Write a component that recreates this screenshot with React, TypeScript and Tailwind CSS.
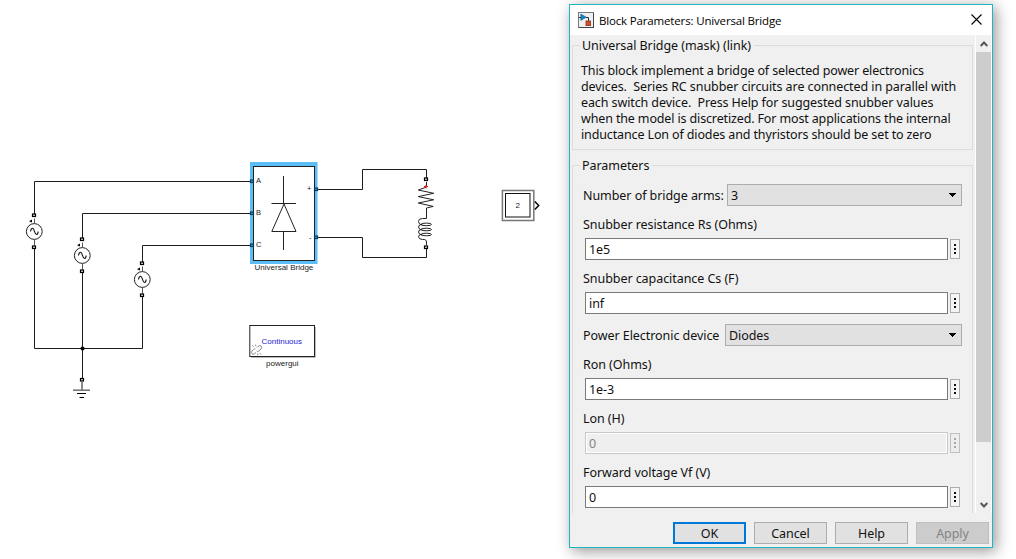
import type { ReactNode } from "react";

function Port({ x, y, blue = false }: { x: number; y: number; blue?: boolean }) {
  return (
    <rect
      x={x - 1.5}
      y={y - 1}
      width={3}
      height={2.5}
      fill={blue ? "#3d93cf" : "#ddd"}
      stroke={blue ? "#0b3c5e" : "#000"}
      strokeWidth={1.2}
    />
  );
}

function AcSource({ x, y }: { x: number; y: number }) {
  return (
    <g>
      <path d={`M${x} ${y - 13}v5M${x} ${y + 8}v6`} stroke="#555" strokeWidth={1} />
      <circle cx={x - 0.2} cy={y} r={7.9} fill="#fff" stroke="#222" strokeWidth={1} />
      <path
        d={`M${x - 4} ${y}c0.4-2.6 1-3.2 2-3.2c2.2 0 1.8 6.2 4 6.2c1 0 1.6-1 1.6-3`}
        fill="none"
        stroke="#111"
        strokeWidth={1.1}
      />
      <path d={`M${x - 5.5} ${y - 10.3}l3-1.6v3z`} fill="#000" />
      <Port x={x - 0.5} y={y - 16.5} />
      <Port x={x - 0.5} y={y + 15.5} />
    </g>
  );
}

function Diagram() {
  return (
    <svg width="569" height="559" viewBox="0 0 569 559" className="shrink-0" fontFamily="'Liberation Sans', Arial, sans-serif" fontSize={8}>
      <g fill="none" stroke="#1c1c1c" strokeWidth={1}>
        <path d="M251 181.5H34.5V214M34.5 248V348.5H142.5V296" />
        <path d="M251 213.5H82.5V238M82.5 272V378" />
        <path d="M251 245.5H142.5V262" />
        <path d="M317 189.5H362.5V169.5H426.5V178M317 237.5H362.5V257.5H426.5V248" />
      </g>
      <rect x={80.8} y={346.8} width={3.5} height={3.5} rx={0.7} />
      <AcSource x={34.5} y={231.5} />
      <AcSource x={82.5} y={255.5} />
      <AcSource x={142.5} y={279.5} />

      <Port x={82} y={379.5} />
      <path d="M82 382v8" stroke="#888" strokeWidth={2} />
      <path d="M73 390.2h17" stroke="#777" strokeWidth={1.6} />
      <path d="M77 393.5h9M79.5 397.5h4.5" stroke="#000" strokeWidth={1} />

      <rect x={250} y={162} width={67.5} height={102} fill="#5cbcf6" />
      <rect x={253.5} y={166.5} width={61} height={94} fill="#fff" stroke="#222" />
      <path
        d="M283.5 176V203.5M271.5 203.5H296M284 204L271.8 231.5H296ZM283.5 231.5V250"
        fill="none"
        stroke="#222"
        strokeWidth={1}
      />
      <Port x={252} y={181} blue />
      <Port x={252} y={213} blue />
      <Port x={252} y={245} blue />
      <Port x={316} y={189} blue />
      <Port x={316} y={237} blue />
      <g fill="#222" fontSize={7.5}>
        <text x={256} y={183.3}>A</text>
        <text x={256} y={215.3}>B</text>
        <text x={256} y={247.3}>C</text>
        <text x={307} y={191}>+</text>
        <text x={309} y={239.5}>-</text>
      </g>
      <text x={254.5} y={270} textLength={58.8} fill="#222">Universal Bridge</text>

      <Port x={426} y={179} />
      <g fill="none" stroke="#222" strokeWidth={1}>
        <path d="M426.5 182V187L418.3 190L433.7 193.3L418.3 196.6L433.7 199.8L418.3 203L433.2 206.4L426.5 208V218.5" />
        <path d="M426.5 218.5H422.5Q418.5 218.5 418.5 221.5T422.5 225.2" />
        <ellipse cx={426.3} cy={224.4} rx={5.2} ry={1.3} />
        <path d="M422.5 224Q418.5 224.5 418.5 227T422.5 230.2" />
        <ellipse cx={426.3} cy={229.5} rx={5.2} ry={1.3} />
        <path d="M422.5 229Q418.5 229.5 418.5 232T422.5 235.2" />
        <ellipse cx={426.3} cy={234.5} rx={5.2} ry={1.3} />
        <path d="M422.5 234Q418.5 234.5 418.5 236.8T422.5 239.5H424.5Q426.5 239.8 426.5 242V245" />
      </g>
      <path d="M424 186.5h4M426 184.8v3.6" stroke="#f01818" strokeWidth={1} />
      <Port x={426} y={247} />

      <rect x={502.4} y={190.5} width={31.4} height={30} fill="#fff" stroke="#777" strokeWidth={1.5} />
      <rect x={505.5} y={193.5} width={24.5} height={23.5} fill="#fff" stroke="#111" />
      <text x={517.7} y={208.2} textAnchor="middle" fill="#222">2</text>
      <path d="M534.8 201.5l3.9 4-3.9 4" fill="none" stroke="#000" strokeWidth={1.5} />

      <path d="M251 357.5H315.5V327" fill="none" stroke="#bbb" />
      <rect x={249.8} y={325.5} width={64.7} height={31} fill="#fff" stroke="#222" />
      <g fill="none" stroke="#888" strokeWidth={1}>
        <path d="M257 347.5l1.4-1.4q1.6-1.2 2.7 0t0 2.7l-2.2 2.2q-1 .8-2 .2" />
        <path d="M255.3 349.2q-1-.6-1.7.1l-1.6 1.7q-1.2 1.6 0 2.7t2.7 0l1.4-1.4" />
        <path d="M252.3 345.3l1.3 1.5M255.6 344.6l.2 1.6M259.6 353l1.5 1.5M257.6 353.6l.2 1.7" />
      </g>
      <text x={261.5} y={344} textLength={40.5} fill="#1b1bd8">Continuous</text>
      <text x={266} y={366} textLength={32.6} fill="#222">powergui</text>
    </svg>
  );
}

function Legend({ children }: { children: ReactNode }) {
  return (
    <div className="flex h-[18px] items-center">
      <div className="h-px w-2 bg-[#dcdcdc]" />
      <span className="pt-[2px] pr-[3px] pl-[2px]">{children}</span>
      <div className="h-px flex-1 bg-[#dcdcdc]" />
    </div>
  );
}

function Select({ label, value, labelWidth }: { label: string; value: string; labelWidth: string }) {
  return (
    <div className="flex h-[22px] items-center pr-[10px] pl-[10px]">
      <span className={`${labelWidth} shrink-0 pt-[2px] whitespace-nowrap`}>{label}</span>
      <div className="flex h-full flex-1 items-center justify-between border border-[#adadad] bg-[#e1e1e1] pr-[5px] pl-[3px]">
        <span className="pt-[2px]">{value}</span>
        <svg width="7" height="4" viewBox="0 0 7 4" shapeRendering="crispEdges">
          <path d="M0 0h7v1H6v1H5v1H4v1H3V3H2V2H1V1H0z" />
        </svg>
      </div>
    </div>
  );
}

function Field({ label, value, disabled = false }: { label: string; value: string; disabled?: boolean }) {
  return (
    <div>
      <div className="h-8 pt-[10px] pl-[10px]">{label}</div>
      <div className="flex h-[22px] items-center gap-[2px] pl-3">
        <div
          className={`flex h-full w-[363px] items-center border pt-[2px] pl-[3px] ${
            disabled ? "border-[#c8c8c8] bg-[#efefef] text-[#838383] shadow-[inset_0_0_0_1px_white]" : "border-[#7a7a7a] bg-white"
          }`}
        >
          {value}
        </div>
        <div
          className={`flex h-5 w-[10px] flex-col items-center justify-center gap-[2px] border ${
            disabled ? "border-[#c0c0c0] bg-[#ededed] text-[#a8a8a8]" : "border-[#adadad] bg-[#f5f5f5] text-[#111]"
          }`}
        >
          <div className="size-[2px] bg-current" />
          <div className="size-[2px] bg-current" />
          <div className="size-[2px] bg-current" />
        </div>
      </div>
    </div>
  );
}

function Button({ children, variant }: { children: ReactNode; variant?: "default" | "disabled" }) {
  const look =
    variant === "default"
      ? "border-2 border-[#0078d7] bg-[#e1e1e1]"
      : variant === "disabled"
        ? "border border-[#bfbfbf] bg-[#cccccc] text-[#838383]"
        : "border border-[#adadad] bg-[#e1e1e1]";
  return <div className={`flex h-[22px] w-[73px] items-center justify-center pt-[2px] ${look}`}>{children}</div>;
}

function ModelIcon() {
  return (
    <svg width="16" height="16" viewBox="0 0 16 16">
      <rect x={0.5} y={0.5} width={15} height={15} fill="#eef0f2" stroke="#777" />
      <path d="M15.5 1v14.5H1" fill="none" stroke="#444" />
      <path d="M2.8 2l5.4 3.2-5.4 3.2z" fill="#1784bd" stroke="#0e5a86" strokeWidth={0.6} />
      <path d="M1 5.5h2M8 5.5h2.5V9" fill="none" stroke="#234" />
      <rect x={8} y={9} width={4.6} height={4.6} fill="#d0512a" stroke="#8c2f14" strokeWidth={0.8} />
    </svg>
  );
}

function Dialog() {
  return (
    <div className="absolute top-1 left-[569px] flex h-[544px] w-[424px] flex-col border border-[#1fb6c1] bg-[#f0f0f0] font-['Noto_Sans',sans-serif] text-[12.5px] leading-[18px] tracking-[-0.06px] text-[#111] shadow-[3px_3px_14px_rgba(0,0,0,0.42)]">
      <div className="flex h-[30px] shrink-0 items-center bg-white pr-[10px] pl-2">
        <ModelIcon />
        <span className="ml-[5px] flex-1 pt-px font-['Open_Sans',sans-serif] text-[11.5px] tracking-[-0.16px] text-black">
          Block Parameters: Universal Bridge
        </span>
        <svg width="11" height="11" viewBox="0 0 11 11" className="mb-[2px]">
          <path d="M.5.5l10 10M10.5.5l-10 10" stroke="#000" strokeWidth={1.1} />
        </svg>
      </div>

      <div className="flex h-[478px] shrink-0 overflow-hidden">
        <div className="w-[405px] shrink-0 pt-[1px] pl-[2px]">
          <div className="w-[401px]">
            <Legend>Universal Bridge (mask) (link)</Legend>
            <div className="-mt-[9px] h-[105px] border border-t-0 border-[#dcdcdc] pt-[18px] pl-2 leading-4 whitespace-pre">
              <div className="tracking-[-0.14px]">This block implement a bridge of selected power electronics</div>
              <div className="tracking-[-0.08px]">devices.  Series RC snubber circuits are connected in parallel with</div>
              <div className="tracking-[-0.1px]">each switch device.  Press Help for suggested snubber values</div>
              <div className="tracking-[-0.14px]">when the model is discretized. For most applications the internal</div>
              <div className="tracking-[-0.13px]">inductance Lon of diodes and thyristors should be set to zero</div>
            </div>
          </div>
          <div className="mt-[6px] w-[401px]">
            <Legend>Parameters</Legend>
            <div className="-mt-[9px] h-[380px] border border-t-0 border-[#dcdcdc] pt-[19px]">
              <Select label="Number of bridge arms:" value="3" labelWidth="w-[144px]" />
              <Field label="Snubber resistance Rs (Ohms)" value="1e5" />
              <Field label="Snubber capacitance Cs (F)" value="inf" />
              <div className="h-[10px]" />
              <Select label="Power Electronic device" value="Diodes" labelWidth="w-[142px]" />
              <Field label="Ron (Ohms)" value="1e-3" />
              <Field label="Lon (H)" value="0" disabled />
              <Field label="Forward voltage Vf (V)" value="0" />
            </div>
          </div>
        </div>
        <div className="flex w-[17px] flex-col items-center border-x border-white bg-[#f0f0f0]">
          <div className="flex h-[17px] w-full shrink-0 items-center justify-center">
            <svg width="8" height="6" viewBox="0 0 8 6">
              <path d="M.7 5L4 1.5 7.3 5" fill="none" stroke="#555" strokeWidth={1.9} />
            </svg>
          </div>
          <div className="h-[390px] w-full bg-[#cdcdcd]" />
          <div className="mt-auto flex h-[17px] w-full items-center justify-center">
            <svg width="8" height="6" viewBox="0 0 8 6">
              <path d="M.7 1L4 4.5 7.3 1" fill="none" stroke="#555" strokeWidth={1.9} />
            </svg>
          </div>
        </div>
      </div>

      <div className="flex justify-end gap-2 pt-[9px] pr-[3px]">
        <Button variant="default">OK</Button>
        <Button>Cancel</Button>
        <Button>Help</Button>
        <Button variant="disabled">Apply</Button>
      </div>
    </div>
  );
}

export default function App() {
  return (
    <main className="relative flex h-[559px] w-[1016px] overflow-hidden bg-white">
      <Diagram />
      <Dialog />
    </main>
  );
}
